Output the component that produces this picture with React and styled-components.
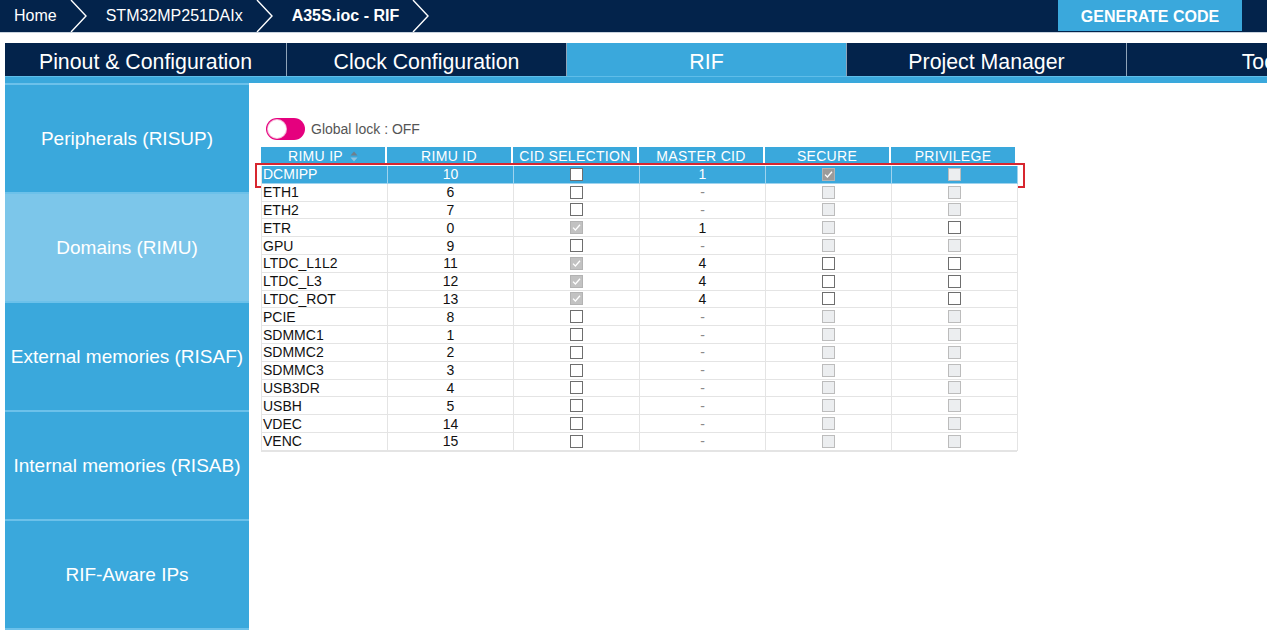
import styled, { createGlobalStyle } from "styled-components";

const NAVY = "#03234b";
const BLUE = "#3aa8dc";

const GlobalStyle = createGlobalStyle`
  body {
    margin: 0;
    background: #fff;
    font-family: "Liberation Sans", Arial, sans-serif;
    overflow: hidden;
  }
`;

const crumbs = [
  { label: "Home" },
  { label: "STM32MP251DAIx" },
  { label: "A35S.ioc - RIF", bold: true },
];

const tabs = ["Pinout & Configuration", "Clock Configuration", "RIF", "Project Manager", "Tools"];

const sideItems = [
  "Peripherals (RISUP)",
  "Domains (RIMU)",
  "External memories (RISAF)",
  "Internal memories (RISAB)",
  "RIF-Aware IPs",
  "",
];

const columns = ["RIMU IP", "RIMU ID", "CID SELECTION", "MASTER CID", "SECURE", "PRIVILEGE"];

const plain = (ip, id) => ({ ip, id, cid: "on", master: "-", sec: "off", priv: "off" });

const rows = [
  { ip: "DCMIPP", id: 10, cid: "on", master: "1", sec: "checked", priv: "off", selected: true },
  plain("ETH1", 6),
  plain("ETH2", 7),
  { ip: "ETR", id: 0, cid: "checked", master: "1", sec: "off", priv: "on" },
  plain("GPU", 9),
  { ip: "LTDC_L1L2", id: 11, cid: "checked", master: "4", sec: "on", priv: "on" },
  { ip: "LTDC_L3", id: 12, cid: "checked", master: "4", sec: "on", priv: "on" },
  { ip: "LTDC_ROT", id: 13, cid: "checked", master: "4", sec: "on", priv: "on" },
  plain("PCIE", 8),
  plain("SDMMC1", 1),
  plain("SDMMC2", 2),
  plain("SDMMC3", 3),
  plain("USB3DR", 4),
  plain("USBH", 5),
  plain("VDEC", 14),
  plain("VENC", 15),
];

const Chevron = () => (
  <ChevronSvg width="17" height="32" viewBox="0 0 17 32">
    <path d="M1 0 L16 16 L1 32" fill="none" stroke="#fff" strokeWidth="1.4" />
  </ChevronSvg>
);

const SortIcon = () => (
  <svg width="8" height="11" viewBox="0 0 8 11" style={{ marginLeft: 7 }}>
    <path d="M0.5 4.5 L4 0.5 L7.5 4.5 Z" fill="#6f7f8c" />
    <path d="M0.5 6.5 L4 10.5 L7.5 6.5 Z" fill="#8fc3e2" />
  </svg>
);

const Checkbox = ({ state, dark }) => (
  <Box $state={state} $dark={dark}>
    {state === "checked" && (
      <svg width="11" height="11" viewBox="0 0 11 11">
        <path d="M2 5.6 L4.4 8 L9 2.8" fill="none" stroke="#fff" strokeWidth="1.3" />
      </svg>
    )}
  </Box>
);

const App = () => {
  return (
    <>
      <GlobalStyle />
      <TopBar>
        <Crumbs>
          {crumbs.map((c) => (
            <Crumb key={c.label} $bold={c.bold}>
              {c.label}
              <Chevron />
            </Crumb>
          ))}
        </Crumbs>
        <GenerateButton>GENERATE CODE</GenerateButton>
      </TopBar>

      <TabRow>
        {tabs.map((t) => (
          <Tab key={t} $active={t === "RIF"}>{t}</Tab>
        ))}
      </TabRow>
      <TabStrip />

      <Body>
        <Sidebar>
          {sideItems.map((s, i) => (
            <SideItem key={i} $active={s === "Domains (RIMU)"}>{s}</SideItem>
          ))}
        </Sidebar>

        <Main>
          <LockRow>
            <Toggle>
              <Knob />
            </Toggle>
            <LockLabel>Global lock : OFF</LockLabel>
          </LockRow>

          <Table>
            <HeadRow>
              {columns.map((c, i) => (
                <HeadCell key={c}>
                  {c}
                  {i === 0 && <SortIcon />}
                </HeadCell>
              ))}
            </HeadRow>
            {rows.map((r) => (
              <Row key={r.ip} $selected={r.selected}>
                <Cell $selected={r.selected} $left>{r.ip}</Cell>
                <Cell $selected={r.selected}>{r.id}</Cell>
                <Cell $selected={r.selected}><Checkbox state={r.cid} /></Cell>
                <Cell $selected={r.selected} $muted={r.master === "-"}>{r.master}</Cell>
                <Cell $selected={r.selected}><Checkbox state={r.sec} dark={r.selected} /></Cell>
                <Cell $selected={r.selected}><Checkbox state={r.priv} /></Cell>
              </Row>
            ))}
          </Table>
        </Main>
      </Body>
    </>
  );
};

const TopBar = styled.div`
  height: 32px;
  background: ${NAVY};
  display: flex;
  align-items: flex-start;
  justify-content: space-between;
  border-bottom: 1px solid #c9d3de;
`;

const Crumbs = styled.div`
  display: flex;
  align-items: center;
  height: 32px;
  padding-left: 14px;
`;

const Crumb = styled.div`
  display: flex;
  align-items: center;
  color: #fff;
  font-size: 16px;
  font-weight: ${(p) => (p.$bold ? 700 : 400)};
  white-space: nowrap;
`;

const ChevronSvg = styled.svg`
  margin: 0 19px 0 13px;
  display: block;
`;

const GenerateButton = styled.div`
  width: 184px;
  height: 31px;
  margin-right: 25px;
  padding-top: 2px;
  box-sizing: border-box;
  background: ${BLUE};
  color: #fff;
  font-size: 16px;
  font-weight: 700;
  display: flex;
  align-items: center;
  justify-content: center;
`;

const TabRow = styled.div`
  margin: 10px 0 0 5px;
  height: 33px;
  display: flex;
  overflow: hidden;
`;

const Tab = styled.div`
  flex: 0 0 280px;
  background: ${(p) => (p.$active ? BLUE : NAVY)};
  color: #fff;
  font-size: 21.3px;
  padding-top: 5px;
  box-sizing: border-box;
  display: flex;
  align-items: center;
  justify-content: center;
  border-right: 1px solid #8fa3b8;
  white-space: nowrap;

  &:first-child {
    flex-basis: 282px;
  }
`;

const TabStrip = styled.div`
  margin-left: 5px;
  height: 6px;
  background: ${BLUE};
  border-top: 1px solid #5fbde9;
`;

const Body = styled.div`
  display: flex;
  padding-left: 5px;
`;

const Sidebar = styled.div`
  width: 244px;
  flex: none;
  display: flex;
  flex-direction: column;
`;

const SideItem = styled.div`
  height: 107px;
  flex: none;
  border-top: 2px solid #6cc1ea;
  background: ${(p) => (p.$active ? "#7cc6ea" : BLUE)};
  color: #fff;
  font-size: 19px;
  display: flex;
  align-items: center;
  justify-content: center;
  white-space: nowrap;
`;

const Main = styled.div`
  flex: 1;
  padding: 35px 0 0 12px;
`;

const LockRow = styled.div`
  display: flex;
  align-items: center;
  gap: 6px;
  margin-left: 5px;
  height: 22px;
  margin-bottom: 7px;
`;

const Toggle = styled.div`
  width: 39px;
  height: 22px;
  border-radius: 11px;
  background: #e5007e;
  display: flex;
  align-items: center;
  padding-left: 2px;
  box-sizing: border-box;
`;

const Knob = styled.div`
  width: 18px;
  height: 18px;
  border-radius: 50%;
  background: #fff;
  box-shadow: 0 0 0 1px #f6b8d8;
`;

const LockLabel = styled.span`
  color: #555;
  font-size: 14px;
`;

const Table = styled.div`
  width: 756px;
  border-bottom: 1px solid #e4e4e4;
`;

const HeadRow = styled.div`
  display: grid;
  grid-template-columns: repeat(6, 126px);
  height: 18px;
  margin-bottom: 1px;
`;

const HeadCell = styled.div`
  background: ${BLUE};
  color: #fff;
  font-size: 14px;
  letter-spacing: 0.3px;
  display: flex;
  align-items: center;
  justify-content: center;
  border-right: 2px solid #fff;
  white-space: nowrap;
`;

const Row = styled.div`
  position: relative;
  display: grid;
  grid-template-columns: repeat(6, 126px);
  height: 17.8px;
  border-left: 1px solid #e4e4e4;
  background: ${(p) => (p.$selected ? BLUE : "#fff")};

  ${(p) =>
    p.$selected &&
    `
    &::after {
      content: "";
      position: absolute;
      top: -3px;
      bottom: -4px;
      left: -7px;
      right: -8px;
      border: 2px solid #d7262f;
      pointer-events: none;
    }
  `}
`;

const Cell = styled.div`
  display: flex;
  align-items: center;
  justify-content: ${(p) => (p.$left ? "flex-start" : "center")};
  padding-left: ${(p) => (p.$left ? "1px" : "0")};
  font-size: 14px;
  color: ${(p) => (p.$selected ? "#fff" : p.$muted ? "#8a8a8a" : "#111")};
  border-right: 1px solid ${(p) => (p.$selected ? "#9fd3ee" : "#e4e4e4")};
  border-bottom: 1px solid ${(p) => (p.$selected ? "#9fd3ee" : "#e4e4e4")};
  box-sizing: border-box;
  white-space: nowrap;
`;

const Box = styled.span`
  width: 13px;
  height: 13px;
  box-sizing: border-box;
  display: flex;
  align-items: center;
  justify-content: center;
  border: 1px solid
    ${(p) => (p.$state === "on" ? "#6e6e6e" : p.$state === "checked" ? "#b3b3b3" : "#bcbcbc")};
  background: ${(p) =>
    p.$state === "on"
      ? "#fff"
      : p.$state === "checked"
      ? p.$dark
        ? "#9b9b9b"
        : "#c2c2c2"
      : "#eceef0"};
`;

export default App;
